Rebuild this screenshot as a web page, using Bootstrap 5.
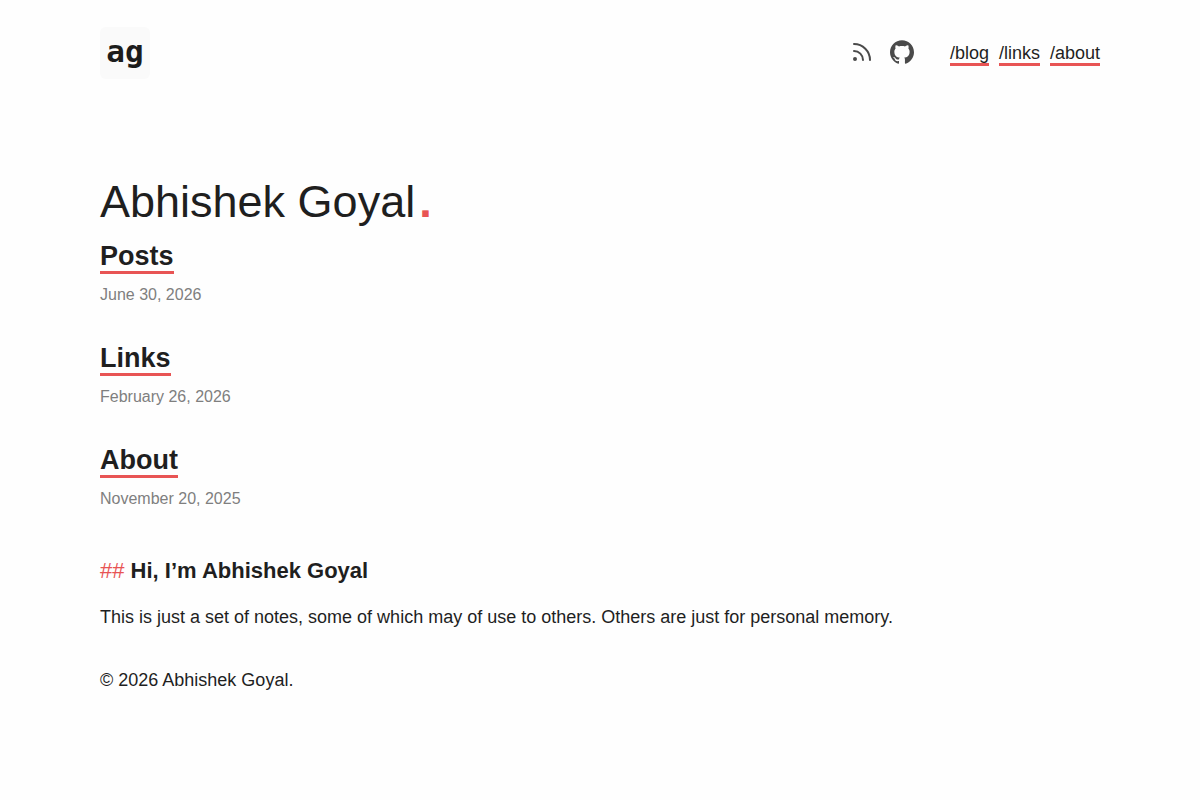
<!DOCTYPE html>
<html lang="en">
<head>
<meta charset="utf-8">
<meta name="viewport" content="width=device-width, initial-scale=1">
<title>Abhishek Goyal</title>
<link rel="stylesheet" href="https://cdn.jsdelivr.net/npm/bootstrap@5.3.0/dist/css/bootstrap.min.css">
<style>
:root { --accent: #e85454; --ink: #1f1f1f; }
body { font-family: "Liberation Sans", Arial, sans-serif; font-size: 18px; line-height: 27px; color: var(--ink); background: #fefefe; }
.page { max-width: 1048px; }
.site-header { padding-top: 27px; }
.brand-mark { width: 50px; height: 52px; padding-bottom: 4px; background: #fafafa; border-radius: 6px; font: bold 31px/48px "DejaVu Sans Mono", monospace; color: #1c1c1c; }
.accent-link { color: var(--ink); text-decoration: none; border-bottom: 3px solid var(--accent); }
.site-nav { gap: 10px; }
.site-nav .accent-link { line-height: 19px; }
.site-icons { gap: 16px; margin-right: 36px; padding-bottom: 2px; color: #4a4a4a; }
.page-title { font-size: 45px; line-height: 54px; margin-bottom: 12px; }
.accent-text { color: var(--accent); }
.entry-list { gap: 35px; }
.entry-title { font-size: 27px; line-height: 30px; margin-bottom: 10px; }
.entry-date { font-size: 16px; line-height: 27px; color: #7f7f7f; }
.intro { margin-top: 45px; }
.intro-title { font-size: 22px; line-height: 27px; margin-bottom: 20px; }
.site-footer { margin-top: 36px; }
</style>
</head>
<body>
<div class="page container-fluid px-4">
  <header class="site-header d-flex flex-wrap align-items-center justify-content-between">
    <a href="#" class="brand-mark d-flex align-items-center justify-content-center text-decoration-none">ag</a>
    <div class="d-flex flex-wrap align-items-end">
      <div class="site-icons d-flex">
        <a href="#" class="d-flex text-reset" aria-label="RSS feed"><svg width="24" height="24" viewBox="0 0 24 24" fill="none" stroke="currentColor" stroke-width="2" stroke-linecap="round"><path d="M4 11a9 9 0 0 1 9 9M4 4a16 16 0 0 1 16 16"/><circle cx="5" cy="19" r="1"/></svg></a>
        <a href="#" class="d-flex text-reset" aria-label="GitHub"><svg width="24" height="24" viewBox="0 0 24 24" fill="currentColor"><path d="M12 .297c-6.63 0-12 5.373-12 12 0 5.303 3.438 9.8 8.205 11.385.6.113.82-.258.82-.577 0-.285-.01-1.04-.015-2.04-3.338.724-4.042-1.61-4.042-1.61C4.422 18.07 3.633 17.7 3.633 17.7c-1.087-.744.084-.729.084-.729 1.205.084 1.838 1.236 1.838 1.236 1.07 1.835 2.809 1.305 3.495.998.108-.776.417-1.305.76-1.605-2.665-.3-5.466-1.332-5.466-5.93 0-1.31.465-2.38 1.235-3.22-.135-.303-.54-1.523.105-3.176 0 0 1.005-.322 3.3 1.23.96-.267 1.98-.399 3-.405 1.02.006 2.04.138 3 .405 2.28-1.552 3.285-1.23 3.285-1.23.645 1.653.24 2.873.12 3.176.765.84 1.23 1.91 1.23 3.22 0 4.61-2.805 5.625-5.475 5.92.42.36.81 1.096.81 2.22 0 1.606-.015 2.896-.015 3.286 0 .315.21.69.825.57C20.565 22.092 24 17.592 24 12.297c0-6.627-5.373-12-12-12"/></svg></a>
      </div>
      <nav class="site-nav d-flex" aria-label="Main">
        <a href="#" class="accent-link">/blog</a>
        <a href="#" class="accent-link">/links</a>
        <a href="#" class="accent-link">/about</a>
      </nav>
    </div>
  </header>

  <main class="mt-5 pt-5">
    <h1 class="page-title fw-normal">Abhishek Goyal<span class="accent-text fw-bold ms-1">.</span></h1>
    <div class="entry-list d-flex flex-column">
      <article>
        <h2 class="entry-title fw-bold"><a href="#" class="accent-link">Posts</a></h2>
        <time class="entry-date d-block" datetime="2026-06-30">June 30, 2026</time>
      </article>
      <article>
        <h2 class="entry-title fw-bold"><a href="#" class="accent-link">Links</a></h2>
        <time class="entry-date d-block" datetime="2026-02-26">February 26, 2026</time>
      </article>
      <article>
        <h2 class="entry-title fw-bold"><a href="#" class="accent-link">About</a></h2>
        <time class="entry-date d-block" datetime="2025-11-20">November 20, 2025</time>
      </article>
    </div>
    <section class="intro">
      <h3 class="intro-title fw-bold"><span class="accent-text fw-normal">##</span> Hi, I’m Abhishek Goyal</h3>
      <p class="mb-0">This is just a set of notes, some of which may of use to others. Others are just for personal memory.</p>
    </section>
  </main>

  <footer class="site-footer">© 2026 Abhishek Goyal.</footer>
</div>
<script src="https://cdn.jsdelivr.net/npm/bootstrap@5.3.0/dist/js/bootstrap.bundle.min.js"></script>
</body>
</html>
